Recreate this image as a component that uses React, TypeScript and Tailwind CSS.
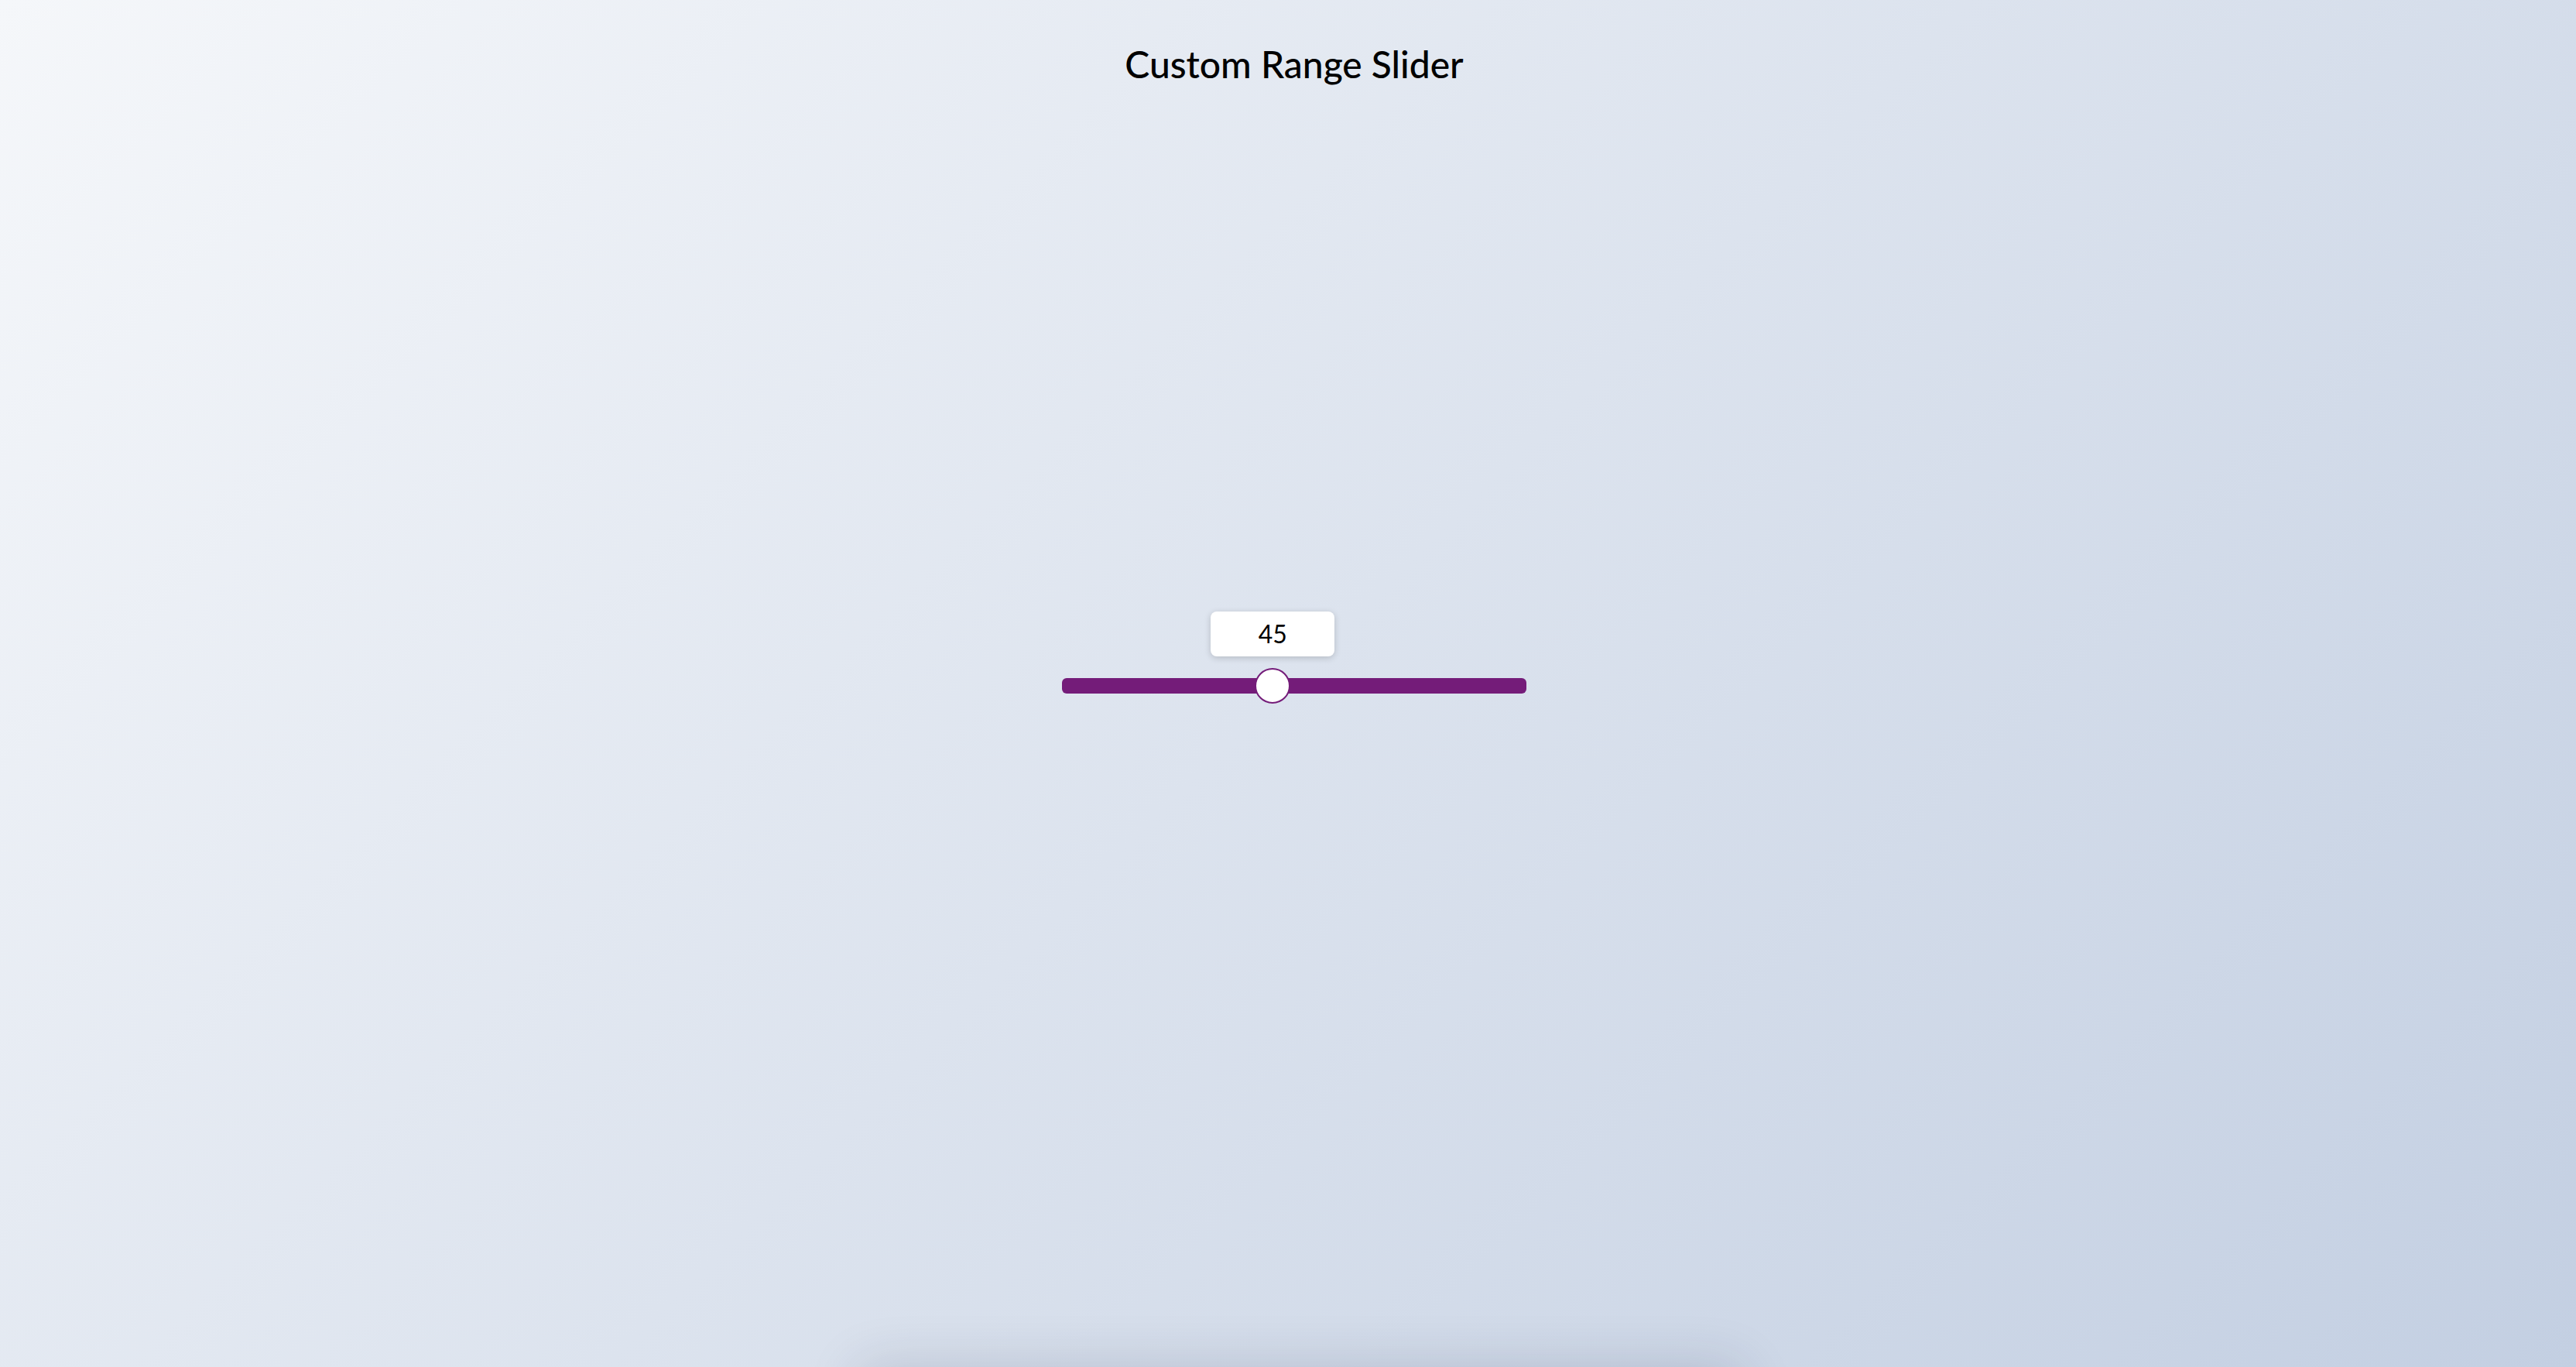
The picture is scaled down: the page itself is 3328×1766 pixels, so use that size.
import { useState } from "react";

const MIN = 0;
const MAX = 100;
const THUMB = 46;
const TRACK = 600;

function RangeSlider() {
  const [value, setValue] = useState(45);
  const pct = (value - MIN) / (MAX - MIN);
  const left = THUMB / 2 + pct * (TRACK - THUMB);

  return (
    <div className="relative w-[600px] h-5">
      {/* value bubble follows the thumb */}
      <div
        style={{ left }}
        className="absolute bottom-[48px] -translate-x-1/2 w-[160px] h-[58px] flex items-center justify-center rounded-lg bg-white shadow-[0_2px_8px_rgba(0,0,0,0.18)] text-[32px] text-black font-['Lato','Liberation_Sans',sans-serif]"
      >
        {value}
      </div>
      <input
        type="range"
        min={MIN}
        max={MAX}
        value={value}
        onChange={(e) => setValue(Number(e.target.value))}
        className="block w-full h-5 m-0 appearance-none rounded-[6px] bg-[#741c79] outline-none cursor-pointer [&::-webkit-slider-thumb]:appearance-none [&::-webkit-slider-thumb]:w-[46px] [&::-webkit-slider-thumb]:h-[46px] [&::-webkit-slider-thumb]:rounded-full [&::-webkit-slider-thumb]:bg-white [&::-webkit-slider-thumb]:border-2 [&::-webkit-slider-thumb]:border-solid [&::-webkit-slider-thumb]:border-[#741c79] [&::-webkit-slider-thumb]:mt-0"
      />
    </div>
  );
}

export default function App() {
  return (
    <div className="h-screen overflow-hidden flex flex-col bg-[linear-gradient(135deg,#f5f7fa_0%,#c3cfe2_100%)] font-['Lato','Liberation_Sans',sans-serif]">
      <div className="h-screen shrink-0 grid grid-rows-[130px_1fr_124px] pl-4">
        <h1 className="pt-[59px] text-center text-[48px] leading-none font-medium text-black">
          Custom Range Slider
        </h1>
        <div className="flex items-center justify-center">
          <RangeSlider />
        </div>
        <div />
      </div>
      {/* card below the fold, only its shadow shows */}
      <div className="shrink-0 w-[1140px] h-[400px] mx-auto translate-x-4 rounded-xl bg-[#d3d9e5] shadow-[0_0_70px_rgba(30,40,70,0.16)]" />
    </div>
  );
}
